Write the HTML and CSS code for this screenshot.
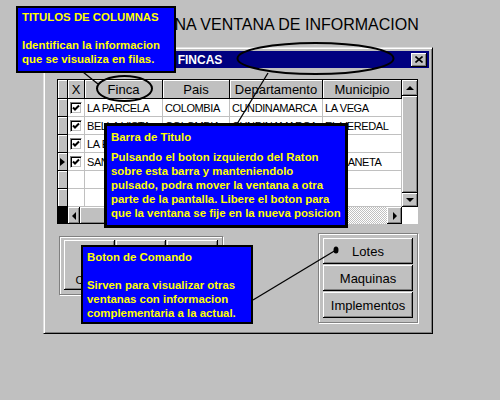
FILE: index.html
```html
<!DOCTYPE html>
<html lang="es">

<head>
     <meta charset="UTF-8" />
     <title>Una ventana de informacion</title>
     <link rel="stylesheet" href="styles.css">
</head>

<body>

     <div class="page">
          <h1 class="page-title">UNA VENTANA DE INFORMACION</h1>

          <div class="window">
               <div class="titlebar">
                    <span class="title-text">ARCHIVO DE FINCAS</span>
                    <span class="close-btn">
                         <svg width="8" height="7" viewBox="0 0 8 7">
                              <path d="M0.5 0.5 L7.5 6.5 M7.5 0.5 L0.5 6.5" stroke="#000" stroke-width="1.6" fill="none" />
                         </svg>
                    </span>
               </div>

               <div class="window-body">
                    <div class="grid">
                         <div class="hd"></div>
                         <div class="hd">X</div>
                         <div class="hd">Finca</div>
                         <div class="hd">Pais</div>
                         <div class="hd">Departamento</div>
                         <div class="hd">Municipio</div>

                         <div class="vscroll">
                              <div class="sb-btn sb-up"><span class="arrow-up"></span></div>
                              <div class="sb-btn sb-thumb"></div>
                              <div class="sb-btn sb-down"><span class="arrow-down"></span></div>
                         </div>

                         <div class="sel"></div>
                         <div class="cell cell-check"><span class="check"></span></div>
                         <div class="cell">LA PARCELA</div>
                         <div class="cell">COLOMBIA</div>
                         <div class="cell">CUNDINAMARCA</div>
                         <div class="cell">LA VEGA</div>

                         <div class="sel"></div>
                         <div class="cell cell-check"><span class="check"></span></div>
                         <div class="cell">BELLA VISTA</div>
                         <div class="cell">COLOMBIA</div>
                         <div class="cell">CUNDINAMARCA</div>
                         <div class="cell">EL VEREDAL</div>

                         <div class="sel"></div>
                         <div class="cell cell-check"><span class="check"></span></div>
                         <div class="cell">LA ESPERANZA</div>
                         <div class="cell">COLOMBIA</div>
                         <div class="cell">CUNDINAMARCA</div>
                         <div class="cell">UNE</div>

                         <div class="sel"><span class="row-mark"></span></div>
                         <div class="cell cell-check"><span class="check"></span></div>
                         <div class="cell">SAN JOSE</div>
                         <div class="cell">COLOMBIA</div>
                         <div class="cell">CUNDINAMARCA</div>
                         <div class="cell">MESANETA</div>

                         <div class="sel"></div>
                         <div class="cell"></div>
                         <div class="cell"></div>
                         <div class="cell"></div>
                         <div class="cell"></div>
                         <div class="cell"></div>

                         <div class="sel"></div>
                         <div class="cell"></div>
                         <div class="cell"></div>
                         <div class="cell"></div>
                         <div class="cell"></div>
                         <div class="cell"></div>

                         <div class="hscroll-pad"></div>
                         <div class="hscroll">
                              <div class="sb-btn sb-left"><span class="arrow-left"></span></div>
                              <div class="sb-btn sb-hthumb"></div>
                              <div class="sb-track"></div>
                              <div class="sb-btn sb-right"><span class="arrow-right"></span></div>
                         </div>
                         <div class="corner"></div>
                    </div>

                    <div class="controls">
                         <div class="frame frame-left">
                              <button class="btn btn-big">Crear</button>
                              <button class="btn btn-big">Editar</button>
                              <button class="btn btn-big">Borrar</button>
                         </div>
                         <div class="frame frame-right">
                              <button class="btn">Lotes</button>
                              <button class="btn">Maquinas</button>
                              <button class="btn">Implementos</button>
                         </div>
                    </div>
               </div>
          </div>
     </div>

     <svg class="annotations" width="500" height="400" viewBox="0 0 500 400">
          <ellipse cx="124.5" cy="88.5" rx="27.5" ry="12.5" fill="none" stroke="#000" stroke-width="2" />
          <ellipse cx="315.5" cy="58.5" rx="78" ry="15.5" fill="none" stroke="#000" stroke-width="2" />
          <line x1="83" y1="72" x2="98" y2="84" stroke="#000" stroke-width="1.3" />
          <line x1="268" y1="73" x2="237" y2="124" stroke="#000" stroke-width="1.3" />
          <line x1="336" y1="250" x2="253" y2="300" stroke="#000" stroke-width="1.3" />
          <ellipse cx="336" cy="250" rx="2.5" ry="3.5" fill="#000" />
     </svg>

     <div class="tip tip-columns">
          <p class="tip-head">TITULOS DE COLUMNAS</p>
          <p>Identifican la informacion<br>que se visualiza en filas.</p>
     </div>

     <div class="tip tip-titlebar">
          <p class="tip-head tip-head-short">Barra de Titulo</p>
          <p>Pulsando el boton izquierdo del Raton<br>sobre esta barra y manteniendolo<br>pulsado, podra mover la ventana a otra<br>parte de la pantalla. Libere el boton para<br>que la ventana se fije en la nueva posicion</p>
     </div>

     <div class="tip tip-buttons">
          <p class="tip-head">Boton de Comando</p>
          <p>Sirven para visualizar otras<br>ventanas con informacion<br>complementaria a la actual.</p>
     </div>

</body>

</html>
```

FILE: styles.css
```css
* {
     box-sizing: border-box;
     margin: 0;
     padding: 0;
}

body {
     position: relative;
     width: 500px;
     height: 400px;
     overflow: hidden;
     background: #c0c0c0;
     font-family: 'Liberation Sans', Arial, sans-serif;
     color: #000;
}

.page {
     padding-top: 15px;
}

.page-title {
     font-size: 16px;
     font-weight: normal;
     line-height: 20px;
     padding-left: 163px;
}

/* window frame */
.window {
     margin: 12px 0 0 43px;
     width: 390px;
     height: 287px;
     padding: 3px;
     border: 1px solid;
     border-color: #dfdfdf #000 #000 #dfdfdf;
     box-shadow: inset 1px 1px #fff, inset -1px -1px #808080;
}

.titlebar {
     height: 17px;
     background: #000080;
     display: flex;
     align-items: center;
     justify-content: space-between;
     padding: 0 2px 0 52px;
}

.title-text {
     color: #fff;
     font-weight: bold;
     font-size: 12px;
}

.close-btn {
     width: 16px;
     height: 14px;
     background: #c0c0c0;
     box-shadow: inset -1px -1px #000, inset 1px 1px #fff, inset -2px -2px #808080;
     display: flex;
     align-items: center;
     justify-content: center;
}

.window-body {
     padding: 11px 0 0 10px;
}

/* data grid */
.grid {
     display: grid;
     grid-template-columns: 10px 17px 78px 67px 93px 79px 16px;
     grid-template-rows: 19px repeat(6, 18px) 17px;
     width: 361px;
     border-top: 1px solid #000;
     border-left: 1px solid #000;
     background: #fff;
}

.hd,
.sel {
     background: #c0c0c0;
     border-right: 1px solid #000;
     border-bottom: 1px solid #000;
     box-shadow: inset 1px 1px #fff;
     display: flex;
     align-items: center;
     justify-content: center;
}

.hd {
     font-size: 13px;
}

.cell {
     border-right: 1px solid #c0c0c0;
     border-bottom: 1px solid #c0c0c0;
     font-size: 11px;
     letter-spacing: -0.4px;
     padding-left: 2px;
     display: flex;
     align-items: center;
     white-space: nowrap;
     overflow: hidden;
}

.cell-check {
     justify-content: center;
     padding: 0;
}

.check {
     width: 12px;
     height: 12px;
     background: #fff url("data:image/svg+xml,%3Csvg xmlns='http://www.w3.org/2000/svg' width='12' height='12'%3E%3Cpolyline points='3,5.5 5,7.5 9,3.5' fill='none' stroke='%23000' stroke-width='2'/%3E%3C/svg%3E") no-repeat center;
     border: 1px solid;
     border-color: #808080 #fff #fff #808080;
     box-shadow: inset 1px 1px #000, inset -1px -1px #c0c0c0;
}

.row-mark {
     border-top: 4px solid transparent;
     border-bottom: 4px solid transparent;
     border-left: 5px solid #000;
}

.sb-btn {
     background: #c0c0c0;
     box-shadow: inset -1px -1px #000, inset 1px 1px #fff, inset -2px -2px #808080;
     display: flex;
     align-items: center;
     justify-content: center;
}

.vscroll {
     grid-column: 7;
     grid-row: 1 / 8;
     display: flex;
     flex-direction: column;
     background: #c0c0c0;
}

.sb-up {
     height: 16px;
}

.sb-thumb {
     flex: 1;
}

.sb-down {
     height: 14px;
}

.hscroll-pad {
     background: #000;
}

.hscroll {
     grid-column: 2 / 7;
     display: flex;
     background: repeating-conic-gradient(#c0c0c0 0 25%, #fff 0 50%) 0 0 / 2px 2px;
}

.sb-left {
     width: 12px;
}

.sb-hthumb {
     width: 120px;
}

.sb-track {
     flex: 1;
}

.sb-right {
     width: 15px;
}

.corner {
     background: #fff;
}

.arrow-up,
.arrow-down {
     border-left: 4px solid transparent;
     border-right: 4px solid transparent;
}

.arrow-up {
     border-bottom: 4px solid #000;
}

.arrow-down {
     border-top: 4px solid #000;
}

.arrow-left,
.arrow-right {
     border-top: 4px solid transparent;
     border-bottom: 4px solid transparent;
}

.arrow-left {
     border-right: 4px solid #000;
}

.arrow-right {
     border-left: 4px solid #000;
}

/* command buttons */
.controls {
     display: flex;
     justify-content: space-between;
     align-items: flex-start;
     width: 361px;
     padding-left: 2px;
}

.frame {
     border: 1px solid #808080;
     box-shadow: 1px 1px #fff, inset 1px 1px #fff;
}

.frame-left {
     margin-top: 12px;
     width: 164px;
     height: 59px;
     display: flex;
     gap: 1px;
     padding: 3px 4px 4px;
}

.frame-right {
     margin-top: 9px;
     width: 100px;
     display: flex;
     flex-direction: column;
     gap: 1px;
     padding: 4px;
}

.btn {
     font-family: inherit;
     font-size: 13px;
     color: #000;
     background: #c0c0c0;
     border: none;
     box-shadow: inset -1px -1px #000, inset 1px 1px #fff, inset -2px -2px #808080;
}

.frame-right .btn {
     height: 26px;
}

.btn-big {
     flex: 1;
     display: flex;
     align-items: flex-end;
     justify-content: center;
     font-size: 11px;
     padding-bottom: 4px;
}

/* help overlays */
.annotations {
     position: absolute;
     left: 0;
     top: 0;
}

.tip {
     position: absolute;
     background: #0000ff;
     color: #ffff00;
     border: 2px solid #000;
     font-weight: bold;
     font-size: 11.4px;
     line-height: 14px;
     white-space: nowrap;
}

.tip-head {
     margin-bottom: 14px;
}

.tip-head-short {
     margin-bottom: 6px;
}

.tip-columns {
     left: 16px;
     top: 6px;
     width: 160px;
     height: 67px;
     padding: 2px 4px;
}

.tip-titlebar {
     left: 104px;
     top: 123px;
     width: 244px;
     height: 105px;
     padding: 4px;
     border-width: 3px;
}

.tip-buttons {
     left: 81px;
     top: 245px;
     width: 172px;
     height: 79px;
     padding: 3px 4px;
}
```
